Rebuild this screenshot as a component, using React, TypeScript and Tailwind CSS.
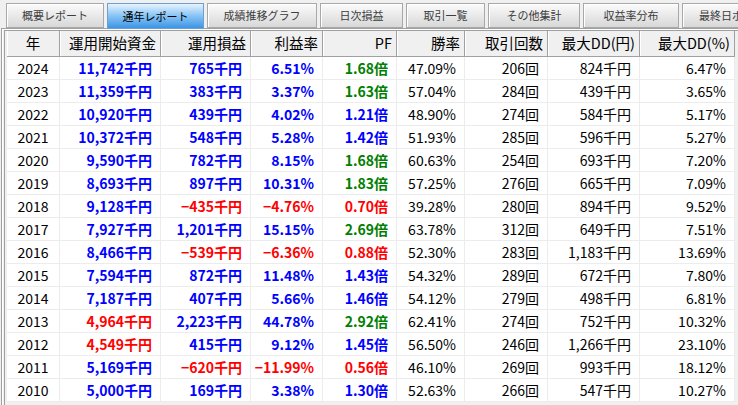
import React from "react";

type Tone = "b" | "r" | "g" | "k";

const tabs = [
  { label: "概要レポート", w: "w-[98px]" },
  { label: "通年レポート", w: "w-[97px]", active: true },
  { label: "成績推移グラフ", w: "w-[110px]" },
  { label: "日次損益", w: "w-[83px]" },
  { label: "取引一覧", w: "w-[79px]" },
  { label: "その他集計", w: "w-[92px]" },
  { label: "収益率分布", w: "w-[96px]" },
  { label: "最終日ポジション", w: "w-[122px]" },
];

const headers = ["年", "運用開始資金", "運用損益", "利益率", "PF", "勝率", "取引回数", "最大DD(円)", "最大DD(%)"];

// year, start, startTone, pnl, pnlTone, rate, pf, win, trades, ddYen, ddPct
const rows: [string, string, Tone, string, Tone, string, string, string, string, string, string][] = [
  ["2024", "11,742", "b", "765", "b", "6.51", "1.68", "47.09", "206", "824", "6.47"],
  ["2023", "11,359", "b", "383", "b", "3.37", "1.63", "57.04", "284", "439", "3.65"],
  ["2022", "10,920", "b", "439", "b", "4.02", "1.21", "48.90", "274", "584", "5.17"],
  ["2021", "10,372", "b", "548", "b", "5.28", "1.42", "51.93", "285", "596", "5.27"],
  ["2020", "9,590", "b", "782", "b", "8.15", "1.68", "60.63", "254", "693", "7.20"],
  ["2019", "8,693", "b", "897", "b", "10.31", "1.83", "57.25", "276", "665", "7.09"],
  ["2018", "9,128", "b", "−435", "r", "−4.76", "0.70", "39.28", "280", "894", "9.52"],
  ["2017", "7,927", "b", "1,201", "b", "15.15", "2.69", "63.78", "312", "649", "7.51"],
  ["2016", "8,466", "b", "−539", "r", "−6.36", "0.88", "52.30", "283", "1,183", "13.69"],
  ["2015", "7,594", "b", "872", "b", "11.48", "1.43", "54.32", "289", "672", "7.80"],
  ["2014", "7,187", "b", "407", "b", "5.66", "1.46", "54.12", "279", "498", "6.81"],
  ["2013", "4,964", "r", "2,223", "b", "44.78", "2.92", "62.41", "274", "752", "10.32"],
  ["2012", "4,549", "r", "415", "b", "9.12", "1.45", "56.50", "246", "1,266", "23.10"],
  ["2011", "5,169", "b", "−620", "r", "−11.99", "0.56", "46.10", "269", "993", "18.12"],
  ["2010", "5,000", "b", "169", "b", "3.38", "1.30", "52.63", "266", "547", "10.27"],
];

const toneClass: Record<Tone, string> = {
  b: "text-[#0000ff] font-bold",
  r: "text-[#ff0000] font-bold",
  g: "text-[#008000] font-bold",
  k: "text-black",
};

function pfTone(v: string): Tone {
  const n = parseFloat(v);
  if (n < 1) return "r";
  if (n >= 1.5) return "g";
  return "b";
}

function Cell({ children, tone = "k", center }: { children: React.ReactNode; tone?: Tone; center?: boolean }) {
  return (
    <div
      className={`flex h-[23px] items-center border-r border-b border-[#ececec] bg-white text-[14px] whitespace-nowrap ${
        center ? "justify-center" : "justify-end pr-[8px]"
      } ${toneClass[tone]}`}
    >
      {children}
    </div>
  );
}

export default function App() {
  return (
    <div className="h-[405px] w-[738px] overflow-hidden bg-[#f0f0f0] font-['Noto_Sans_CJK_JP',sans-serif] leading-none">
      {/* Tabs */}
      <div className="flex h-[28px] gap-[3px] pl-[6px] pt-[3px]">
        {tabs.map((t) =>
          t.active ? (
            <div
              key={t.label}
              className={`${t.w} flex h-[26px] shrink-0 items-center justify-center border border-[#6f9fcf] bg-gradient-to-b from-[#e6f3fe] via-[#86c3f4] to-[#3b95e6] text-[11px] text-black`}
            >
              {t.label}
            </div>
          ) : (
            <div
              key={t.label}
              className={`${t.w} flex h-[25px] shrink-0 items-center justify-center border border-[#a8a8a8] bg-gradient-to-b from-[#fbfbfb] to-[#d8d8d8] text-[11px] text-[#3c3c3c] shadow-[inset_1px_1px_0_#ffffff]`}
            >
              {t.label}
            </div>
          )
        )}
      </div>

      {/* Panel frame */}
      <div className="ml-[1px] h-full border-t border-l border-[#a0a0a0]">
        <div className="h-full border-t border-l border-white">
          <div className="ml-[1px] mt-[0px] h-full border-t border-l border-[#a0a0a0] pl-[2px]">
            <div className="grid w-[728px] grid-cols-[53px_101px_90px_72px_74px_68px_83px_92px_95px]">
              {headers.map((h, i) => (
                <div
                  key={h}
                  className={`flex h-[26px] items-center border-r border-b border-[#a0a0a0] bg-[#f0f0f0] text-[14.5px] text-black shadow-[inset_1px_0_0_#ffffff] whitespace-nowrap ${
                    i === 0 ? "justify-center" : "justify-end pr-[4px]"
                  }`}
                >
                  {h}
                </div>
              ))}
              {rows.map((r) => {
                const [year, start, st, pnl, pt, rate, pf, win, trades, ddYen, ddPct] = r;
                return (
                  <React.Fragment key={year}>
                    <Cell center>{year}</Cell>
                    <Cell tone={st}>{start}千円</Cell>
                    <Cell tone={pt}>{pnl}千円</Cell>
                    <Cell tone={pt}>{rate}%</Cell>
                    <Cell tone={pfTone(pf)}>{pf}倍</Cell>
                    <Cell>{win}%</Cell>
                    <Cell>{trades}回</Cell>
                    <Cell>{ddYen}千円</Cell>
                    <Cell>{ddPct}%</Cell>
                  </React.Fragment>
                );
              })}
            </div>
          </div>
        </div>
      </div>
    </div>
  );
}
